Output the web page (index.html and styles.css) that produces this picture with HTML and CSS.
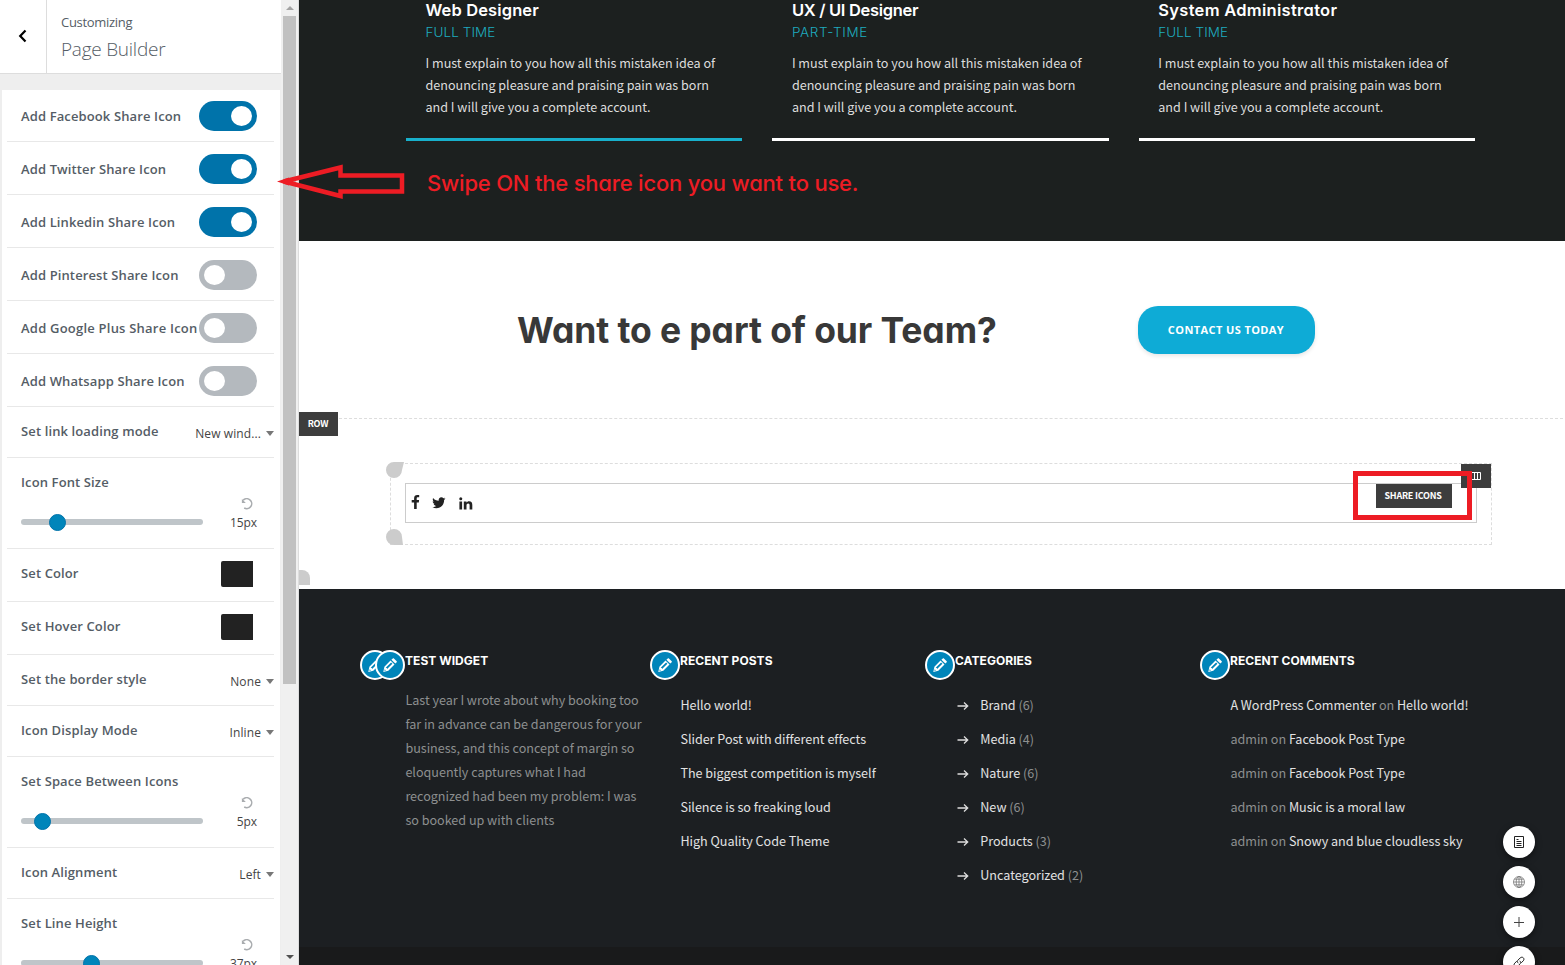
FILE: index.html
```html
<!DOCTYPE html>
<html lang="en">
<head>
<meta charset="utf-8">
<title>Customizing: Page Builder</title>
<link rel="stylesheet" href="styles.css">
</head>
<body>
<svg class="defs" aria-hidden="true">
  <symbol id="reset" viewBox="0 0 12 12"><path d="M2.1 2.2A5 5 0 1 1 3.2 10" fill="none" stroke="#a9acaf" stroke-width="1.5"/><path d="M.9 1v4h3.9z" fill="#a9acaf"/></symbol>
  <symbol id="pencil" viewBox="0 0 20 20"><path fill="#fff" d="M13.9 3.4l2.8 2.8c.3.3.3.8 0 1.1l-1.4 1.3-3.900-3.900 1.400-1.300c.3-.3.8-.3 1.100 0zM10.500 5.500l4 4-6.200 6.200-5 1.200 1.100-5.200zM4.700 14.200l-.3 1.600 1.600-.4zM5.700 12.700l1.100.3.3 1.100 5.300-5.300-1.300-1.300z" fill-rule="evenodd"/></symbol>
  <symbol id="arrow" viewBox="0 0 12 10"><path d="M.5 5h10M7 1.500L10.700 5 7 8.500" fill="none" stroke="#ddd" stroke-width="1.300"/></symbol>
</svg>
<div class="app">
  <aside class="sidebar">
    <div class="controls">
      <header class="head">
        <div class="back"><svg width="10" height="14" viewBox="0 0 10 14"><path d="M7.500 1.500L2.200 7l5.300 5.500" fill="none" stroke="#000" stroke-width="2.200"/></svg></div>
        <div class="titles"><div class="small">Customizing</div><div class="big">Page Builder</div></div>
      </header>
      <div class="panel">
        <div class="row sw first"><span>Add Facebook Share Icon</span><i class="toggle on"></i></div>
        <div class="row sw"><span>Add Twitter Share Icon</span><i class="toggle on"></i></div>
        <div class="row sw"><span>Add Linkedin Share Icon</span><i class="toggle on"></i></div>
        <div class="row sw"><span>Add Pinterest Share Icon</span><i class="toggle"></i></div>
        <div class="row sw"><span class="wide">Add Google Plus Share Icon</span><i class="toggle"></i></div>
        <div class="row sw"><span>Add Whatsapp Share Icon</span><i class="toggle"></i></div>
        <div class="row sel"><span>Set link loading mode</span><b class="dd">New wind...</b></div>
        <div class="row range"><span>Icon Font Size</span><div class="line"><div class="track"><i class="knob" style="margin-left:28px"></i></div><div class="val"><svg><use href="#reset"/></svg><b>15px</b></div></div></div>
        <div class="row col"><span>Set Color</span><i class="swatch"></i></div>
        <div class="row col"><span>Set Hover Color</span><i class="swatch"></i></div>
        <div class="row sel"><span>Set the border style</span><b class="dd">None</b></div>
        <div class="row sel"><span>Icon Display Mode</span><b class="dd">Inline</b></div>
        <div class="row range"><span>Set Space Between Icons</span><div class="line"><div class="track"><i class="knob" style="margin-left:13px"></i></div><div class="val"><svg><use href="#reset"/></svg><b>5px</b></div></div></div>
        <div class="row sel"><span>Icon Alignment</span><b class="dd">Left</b></div>
        <div class="row range"><span>Set Line Height</span><div class="line"><div class="track"><i class="knob" style="margin-left:62px"></i></div><div class="val"><svg><use href="#reset"/></svg><b>37px</b></div></div></div>
      </div>
    </div>
    <div class="scroll"><i class="up"></i><i class="thumb"></i><i class="down"></i></div>
  </aside>

  <main class="preview">
    <section class="jobs">
      <article class="job active"><h3>Web Designer</h3><h4>FULL TIME</h4><p>I must explain to you how all this mistaken idea of<br>denouncing pleasure and praising pain was born<br>and I will give you a complete account.</p></article>
      <article class="job"><h3 class="tight">UX / UI Designer</h3><h4 class="part">PART-TIME</h4><p>I must explain to you how all this mistaken idea of<br>denouncing pleasure and praising pain was born<br>and I will give you a complete account.</p></article>
      <article class="job"><h3 class="loose">System Administrator</h3><h4>FULL TIME</h4><p>I must explain to you how all this mistaken idea of<br>denouncing pleasure and praising pain was born<br>and I will give you a complete account.</p></article>
    </section>
    <section class="cta"><h2>Want to e part of our Team?</h2><a class="button">CONTACT US TODAY</a></section>
    <section class="builder">
      <div class="badge rowbadge">ROW</div>
      <i class="drop corner"></i>
      <div class="column">
        <svg class="drop top" viewBox="0 0 18 16"><path d="M8 0h10l-2 8a8 8 0 1 1-8-8z" fill="#ccc"/></svg>
        <svg class="drop bottom" viewBox="0 0 18 16"><path d="M8 16h9l-1-8a8 8 0 1 0-8 8z" fill="#ccc"/></svg>
        <div class="badge colbadge"><svg width="10" height="8" viewBox="0 0 10 8"><path d="M.5.500h9v7h-9zM3.500.500v7M6.500.500v7" fill="none" stroke="#fff"/></svg></div>
        <div class="element">
          <svg class="fb" width="9" height="14" viewBox="0 0 9 14"><path fill="#222" d="M8.200.100v2.200H6.900c-1 0-1.200.5-1.200 1.200v1.500h2.400l-.3 2.400H5.700V14H3.100V7.400H.700V5h2.400V3.200C3.100 1.100 4.400 0 6.300 0c.9 0 1.700.1 1.900.1z"/></svg>
          <svg class="tw" width="14" height="12" viewBox="0 0 14 12"><path fill="#222" d="M13.500 1.600c-.4.600-.8 1-1.400 1.400.2 4.300-2.900 8.300-7.700 8.300-1.500 0-2.900-.4-4.100-1.200 1.500.2 2.900-.3 4-1.100-1.200 0-2.200-.8-2.600-1.900h1.200C1.600 6.800.700 5.600.700 4.300c.3.200.8.300 1.200.3C.8 3.800.400 2.200 1.100.9c1.300 1.700 3.300 2.700 5.600 2.900C6.300 1.900 7.700.3 9.400.3c.8 0 1.500.3 2 .9.600-.1 1.200-.4 1.700-.7-.2.600-.6 1.200-1.200 1.500.6-.1 1.100-.2 1.600-.4z"/></svg>
          <svg class="li" width="14" height="13" viewBox="0 0 14 13"><path fill="#222" d="M.4 4.400h2.700v8.200H.4zM4.800 4.400h2.700v1.200c.4-.7 1.300-1.400 2.500-1.400 2.600 0 3.300 1.700 3.300 3.900v4.500h-2.700V8.300c0-1.200-.4-1.900-1.400-1.900-1.100 0-1.700.8-1.700 1.900v4.300H4.800z"/><circle cx="1.750" cy="1.800" r="1.500" fill="#222"/></svg>
          <div class="badge elbadge">SHARE ICONS</div>
        </div>
      </div>
    </section>
    <footer class="footer">
      <div class="widget"><i class="edit left"><svg><use href="#pencil"/></svg></i><i class="edit"><svg><use href="#pencil"/></svg></i><h5>TEST WIDGET</h5><p>Last year I wrote about why booking too<br>far in advance can be dangerous for your<br>business, and this concept of margin so<br>eloquently captures what I had<br>recognized had been my problem: I was<br>so booked up with clients</p></div>
      <div class="widget"><i class="edit"><svg><use href="#pencil"/></svg></i><h5>RECENT POSTS</h5><ul><li><a>Hello world!</a></li><li><a>Slider Post with different effects</a></li><li><a>The biggest competition is myself</a></li><li><a>Silence is so freaking loud</a></li><li><a>High Quality Code Theme</a></li></ul></div>
      <div class="widget cats"><i class="edit"><svg><use href="#pencil"/></svg></i><h5>CATEGORIES</h5><ul><li><svg><use href="#arrow"/></svg><a>Brand</a> (6)</li><li><svg><use href="#arrow"/></svg><a>Media</a> (4)</li><li><svg><use href="#arrow"/></svg><a>Nature</a> (6)</li><li><svg><use href="#arrow"/></svg><a>New</a> (6)</li><li><svg><use href="#arrow"/></svg><a>Products</a> (3)</li><li><svg><use href="#arrow"/></svg><a>Uncategorized</a> (2)</li></ul></div>
      <div class="widget"><i class="edit"><svg><use href="#pencil"/></svg></i><h5>RECENT COMMENTS</h5><ul><li><a>A WordPress Commenter</a> on <a>Hello world!</a></li><li>admin on <a>Facebook Post Type</a></li><li>admin on <a>Facebook Post Type</a></li><li>admin on <a>Music is a moral law</a></li><li>admin on <a>Snowy and blue cloudless sky</a></li></ul></div>
    </footer>
    <div class="bottombar"></div>
  </main>

  <svg class="note-arrow" width="130" height="38" viewBox="0 0 130 38"><path d="M8 18.500L64.500 4.500v8h61.500v16H64.500v4.500z" fill="none" stroke="#ed1c24" stroke-width="4.500"/><path d="M1 18.500l12-4v8z" fill="#ed1c24"/></svg>
  <div class="note">Swipe ON the share icon you want to use.</div>
  <div class="note-box"></div>
  <nav class="fabs">
    <i><svg viewBox="0 0 12 12"><path d="M1.500.500h9v11h-9zM3.500 3.500h2M3.500 5.500h5M3.500 7.500h5M3.500 9.500h5" fill="none" stroke="#222"/></svg></i>
    <i><svg viewBox="0 0 12 12"><g fill="none" stroke="#777" stroke-width=".8"><circle cx="6" cy="6" r="5.500"/><ellipse cx="6" cy="6" rx="2.800" ry="5.500"/><path d="M.5 6h11M6 .5v11M1.300 3.200h9.400M1.300 8.800h9.400"/></g></svg></i>
    <i><svg viewBox="0 0 12 12"><path d="M6 1v10M1 6.500h10" fill="none" stroke="#444"/></svg></i>
    <i><svg viewBox="0 0 12 12"><g fill="none" stroke="#222" stroke-width="1" stroke-linecap="round"><path d="M5 6.900c-1-1-.8-2 0-2.800l2.200-2.200c2.200-2 5 .7 3.100 2.900L8.500 6.500"/><path d="M7 5.100c1 1 .8 2 0 2.800l-2.200 2.200c-2.200 2-5-.7-3.100-2.900l1.800-1.700"/></g></svg></i>
  </nav>
</div>
</body>
</html>
```
FILE: styles.css
```css
* { box-sizing: border-box; }
body, h2, h3, h4, h5, p, ul { margin: 0; padding: 0; }
ul { list-style: none; }
i, b { font-style: normal; font-weight: 400; }
body { width: 1565px; height: 965px; overflow: hidden; background: #fff; }
.defs { position: absolute; width: 0; height: 0; }
.app { position: relative; display: flex; width: 1565px; height: 965px; overflow: hidden; }

/* Sidebar */
.sidebar { display: flex; width: 299px; height: 965px; background: #eee; border-right: 1px solid #ddd; font-family: "Open Sans", sans-serif; color: #555d66; overflow: hidden; }
.controls { width: 281px; }
.head { display: flex; height: 74px; background: #fff; border-bottom: 1px solid #ddd; }
.back { display: flex; align-items: center; justify-content: center; width: 47px; padding-bottom: 2px; border-right: 1px solid #ddd; }
.titles { padding: 13px 0 0 14px; }
.small { font-size: 13px; line-height: 19px; letter-spacing: -.3px; }
.big { font-size: 19px; line-height: 32px; font-weight: 300; letter-spacing: -.25px; margin-top: 1px; }
.panel { margin: 16px 1px 0 2px; padding-left: 5px; background: #fff; }
.row { display: flex; justify-content: space-between; width: 267px; height: 53px; padding-left: 14px; border-bottom: 1px solid #e8e8e8; font-size: 13px; line-height: 20px; font-weight: 600; letter-spacing: .12px; white-space: nowrap; }
.sw { padding: 12px 17px 0 14px; }
.sw span { line-height: 30px; width: 178px; }
.sw .wide { letter-spacing: .22px; }
.first { height: 52px; padding-top: 11px; }
.toggle { flex: none; width: 58px; height: 30px; padding: 5px; border-radius: 15px; background: #b4b9be; }
.toggle::before { content: ""; display: block; width: 21px; height: 20px; border-radius: 50%; background: #fff; }
.on { background: #0073aa; padding-left: 32px; }
.sel { height: 51px; padding-top: 14px; }
.dd { display: flex; align-items: center; height: 24px; padding-top: 1px; gap: 5px; font-size: 12px; color: #444; letter-spacing: .1px; }
.dd::after { content: ""; border: 4px solid transparent; border-top: 5px solid #777; border-bottom: 0; }
.range { display: block; height: 91px; padding-top: 14px; }
.line { display: flex; }
.track { display: flex; align-items: center; width: 182px; height: 6px; margin-top: 27px; border-radius: 3px; background: #bfc5c9; }
.knob { width: 17px; height: 17px; margin-top: 1px; border-radius: 50%; background: #0085ba; border: 1px solid #0073aa; }
.val { display: flex; flex-direction: column; align-items: flex-end; width: 54px; padding-top: 6px; }
.val svg { width: 12px; height: 12px; margin-right: 4px; }
.val b { font-size: 12px; line-height: 24px; margin-top: 1px; letter-spacing: -.1px; color: #444; }
.col { padding: 14px 21px 0 14px; }
.swatch { width: 32px; height: 26px; margin-top: -2px; background: #222; border-radius: 2px 0 0 2px; }
.scroll { display: flex; flex-direction: column; align-items: center; width: 17px; height: 965px; background: #f0f0f0; padding-top: 6px; }
.up { border: 4px solid transparent; border-bottom: 4px solid #a3a3a3; border-top: 0; margin-bottom: 6px; }
.thumb { width: 13px; height: 668px; background: #c1c1c1; }
.down { border: 4px solid transparent; border-top: 4px solid #505050; border-bottom: 0; margin-top: 271px; }

/* Page preview */
.preview { width: 1266px; height: 965px; font-family: "Noto Sans CJK SC", sans-serif; }
.jobs { display: flex; gap: 30px; height: 241px; padding-left: 106.800px; background: #1c201f; }
.job { width: 336.400px; height: 141px; padding-left: 19.700px; border-bottom: 3px solid #fff; color: #ddd; font-size: 12.600px; line-height: 22px; letter-spacing: -.010px; white-space: nowrap; }
.active { border-color: #18b0cb; }
.job h3 { font: 600 16.500px/20px Inter, sans-serif; font-feature-settings: "cv11"; letter-spacing: .120px; color: #fff; }
.job .tight { letter-spacing: -.300px; }
.job .loose { letter-spacing: .290px; }
.job h4 { font: 300 13.500px/22px Inter, sans-serif; padding-top: 1px; letter-spacing: .080px; color: #1eaabe; }
.job .part { letter-spacing: .650px; }
.job p { padding-top: 9px; }
.cta { display: flex; align-items: flex-start; height: 177px; }
.cta h2 { width: 839px; padding: 63px 0 0 218px; font: 700 35.500px/54px Inter, sans-serif; font-feature-settings: "cv11"; letter-spacing: -.100px; color: #383838; white-space: nowrap; }
.button { width: 177px; height: 48px; margin-top: 65px; border-radius: 20px; background: #0eabd6; color: #fff; font: 700 11px/48px "Open Sans", sans-serif; letter-spacing: .400px; text-align: center; text-indent: -1px; box-shadow: 0 2px 4px rgba(0, 0, 0, .1); }
.builder { position: relative; height: 171px; padding: 45px 0 0 91px; }
.builder::before { content: ""; position: absolute; left: 0; right: 2px; top: 0; border-top: 1px dashed #ddd; }
.badge { display: flex; align-items: center; justify-content: center; height: 24px; padding-right: 1px; background: #3d3d3d; color: #fff; font-size: 9px; line-height: 24px; font-weight: 700; letter-spacing: -.240px; }
.rowbadge { position: absolute; left: 0; top: -6px; width: 39px; }
.drop { position: absolute; width: 18px; height: 16px; }
.corner { left: 0; top: 152px; width: 11px; height: 15px; border-radius: 0 8px 0 0; background: #ccc; }
.top { left: -5px; top: -2px; }
.bottom { left: -5px; bottom: -1px; }
.column { position: relative; width: 1102px; height: 82px; padding: 19px 14px; border: 1px dashed #ddd; }
.colbadge { position: absolute; right: 0; top: 0; width: 30px; padding: 0; }
.element { display: flex; width: 1072px; height: 40px; padding-left: 4.500px; border: 1px solid #ccc; }
.fb { margin-top: 11px; }
.tw { margin: 13px 0 0 12.500px; }
.li { margin: 13px 0 0 12.500px; }
.elbadge { width: 76px; margin: 0 24px 0 auto; padding-right: 2px; }

.footer { display: flex; height: 358px; padding: 61px 0 0 106px; background: #1c1f22; }
.widget { position: relative; width: 275px; color: #8d8f90; font-size: 12.600px; letter-spacing: -.020px; white-space: nowrap; }
.widget h5 { font: 700 12px/20px Inter, sans-serif; padding-top: 1px; color: #fff; letter-spacing: .040px; }
.widget p { line-height: 24px; margin-top: 17px; padding-left: .4px; }
.widget ul { margin-top: 17px; padding-left: .4px; }
.widget li { line-height: 34px; }
.widget a { color: #e2e2e2; }
.cats li svg { width: 12px; height: 10px; margin: 0 11.300px 0 1.600px; vertical-align: -1px; }
.edit { position: absolute; left: -30px; top: 0; display: flex; align-items: center; justify-content: center; width: 30px; height: 30px; border-radius: 50%; border: 2px solid #fff; background: #0085ba; }
.edit.left { left: -45px; }
.edit svg { width: 20px; height: 20px; }
.bottombar { height: 18px; background: #191a1b; }

/* Annotations over the page */
.note-arrow { position: absolute; left: 276px; top: 163px; }
.note { position: absolute; left: 427px; top: 168px; font: 500 22px/30px Inter, sans-serif; font-feature-settings: "cv11"; letter-spacing: -.200px; color: #ed1c24; white-space: nowrap; }
.note-box { position: absolute; left: 1353px; top: 471px; width: 119px; height: 49px; border: 5px solid #ed1c24; }
.fabs { position: absolute; left: 1503px; top: 826px; display: flex; flex-direction: column; gap: 8px; }
.fabs i { display: flex; align-items: center; justify-content: center; width: 32px; height: 32px; border-radius: 50%; background: #fff; box-shadow: 0 2px 6px rgba(0, 0, 0, .5); }
.fabs svg { width: 12px; height: 12px; }
```
